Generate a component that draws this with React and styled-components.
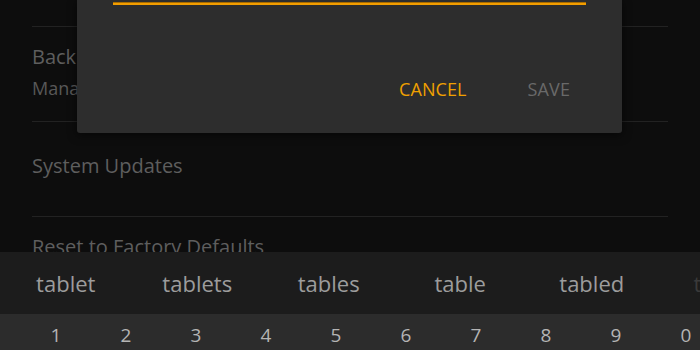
import React from 'react';
import styled, { createGlobalStyle } from 'styled-components';

const GlobalStyle = createGlobalStyle`
  html, body {
    margin: 0;
    padding: 0;
    background: #0d0d0d;
  }
  body {
    font-family: 'Open Sans', 'Noto Sans', sans-serif;
  }
`;

const Screen = styled.div`
  position: relative;
  width: 700px;
  height: 350px;
  display: flex;
  flex-direction: column;
  overflow: hidden;
  background: #0d0d0d;
`;

const SettingsList = styled.div`
  flex: 1;
  overflow: hidden;
  padding: 26px 32px 0;
`;

const Row = styled.div`
  height: 95px;
  box-sizing: border-box;
  border-top: 1px solid #222222;
  padding-top: ${props => (props.single ? '30px' : '16px')};
`;

const Title = styled.div`
  color: #5e5e5e;
  font-size: 20px;
  line-height: 28px;
  white-space: nowrap;
`;

const Subtitle = styled.div`
  color: #585858;
  font-size: 18px;
  line-height: 24px;
  margin-top: 5px;
  white-space: nowrap;
`;

const Dialog = styled.div`
  position: absolute;
  top: 0;
  left: 77px;
  width: 545px;
  height: 133px;
  box-sizing: border-box;
  padding: 2px 36px 0;
  background: #2d2d2d;
  border-radius: 0 0 3px 3px;
  box-shadow: 0 2px 10px rgba(0, 0, 0, 0.6);
`;

const InputLine = styled.div`
  height: 3px;
  background: #f29d00;
  border-top: 1px solid #a86c00;
  box-sizing: border-box;
`;

const ButtonRow = styled.div`
  display: flex;
  justify-content: flex-end;
  gap: 61px;
  margin-top: 72px;
  padding-right: 16px;
`;

const DialogButton = styled.div`
  font-size: 18px;
  line-height: 24px;
  color: ${props => (props.disabled ? '#696969' : '#f0a000')};
  letter-spacing: 0.1px;
`;

const Keyboard = styled.div`
  flex: none;
`;

const SuggestionBar = styled.div`
  height: 62px;
  background: #1c1c1c;
  display: grid;
  grid-template-columns: repeat(6, 131.5px);
  align-items: center;
  overflow: hidden;
`;

const Suggestion = styled.div`
  text-align: center;
  font-size: 22px;
  line-height: 30px;
  color: ${props => (props.faded ? '#3a3a3a' : '#9c9c9c')};
  white-space: nowrap;
`;

const NumberRow = styled.div`
  height: 36px;
  box-sizing: border-box;
  background: #2c2c2c;
  padding: 9px 0 0 21px;
  display: grid;
  grid-template-columns: repeat(10, 70px);
  overflow: hidden;
`;

const Key = styled.div`
  text-align: center;
  font-size: 19px;
  line-height: 24px;
  color: #b4b4b4;
`;

const suggestions = ['tablet', 'tablets', 'tables', 'table', 'tabled', 'tablet'];
const digits = ['1', '2', '3', '4', '5', '6', '7', '8', '9', '0'];

export default function App() {
  return (
    <Screen>
      <GlobalStyle />
      <SettingsList>
        <Row>
          <Title>Backup &amp; Restore</Title>
          <Subtitle>Manage device backups</Subtitle>
        </Row>
        <Row single>
          <Title>System Updates</Title>
        </Row>
        <Row>
          <Title>Reset to Factory Defaults</Title>
        </Row>
      </SettingsList>

      <Keyboard>
        <SuggestionBar>
          {suggestions.map((word, i) => (
            <Suggestion key={i} faded={i === suggestions.length - 1}>
              {word}
            </Suggestion>
          ))}
        </SuggestionBar>
        <NumberRow>
          {digits.map(d => (
            <Key key={d}>{d}</Key>
          ))}
        </NumberRow>
      </Keyboard>

      <Dialog>
        <InputLine />
        <ButtonRow>
          <DialogButton>CANCEL</DialogButton>
          <DialogButton disabled>SAVE</DialogButton>
        </ButtonRow>
      </Dialog>
    </Screen>
  );
}
